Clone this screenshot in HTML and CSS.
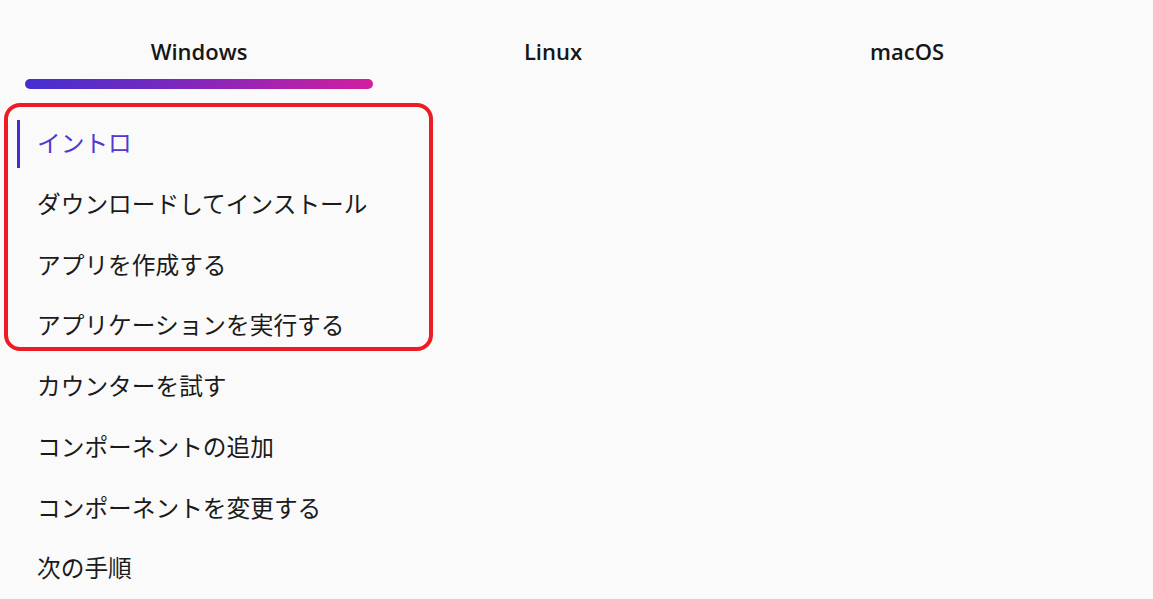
FILE: index.html
```html
<!DOCTYPE html>
<html lang="ja">
<head>
<meta charset="utf-8">
<title>Tutorial</title>
<link rel="stylesheet" href="styles.css">
</head>
<body>
<div class="page">
  <nav class="tabs">
    <div class="tab active"><span class="tab-label">Windows</span><span class="tab-bar"></span></div>
    <div class="tab"><span class="tab-label">Linux</span><span class="tab-bar"></span></div>
    <div class="tab"><span class="tab-label">macOS</span><span class="tab-bar"></span></div>
  </nav>
  <ul class="toc">
    <li class="toc-item active">イントロ</li>
    <li class="toc-item">ダウンロードしてインストール</li>
    <li class="toc-item">アプリを作成する</li>
    <li class="toc-item">アプリケーションを実行する</li>
    <li class="toc-item">カウンターを試す</li>
    <li class="toc-item">コンポーネントの追加</li>
    <li class="toc-item">コンポーネントを変更する</li>
    <li class="toc-item">次の手順</li>
  </ul>
  <div class="highlight"></div>
</div>
</body>
</html>
```

FILE: styles.css
```css
html, body {
  margin: 0;
  padding: 0;
  background: #fafafa;
}

.page {
  position: relative;
  width: 1153px;
  height: 599px;
  overflow: hidden;
  font-family: "Noto Sans CJK JP", "Noto Sans", sans-serif;
  color: #1b1b1b;
}

.tabs {
  display: flex;
  padding-left: 22px;
}

.tab {
  width: 354px;
  display: flex;
  flex-direction: column;
  align-items: center;
  padding-top: 36px;
}

.tab-label {
  font-family: "Open Sans", "Noto Sans", sans-serif;
  font-weight: 600;
  font-size: 22px;
  line-height: 30px;
  color: #161616;
}

.tab-bar {
  align-self: stretch;
  margin: 13px 3px 0;
  height: 10px;
  border-radius: 5px;
  background: transparent;
}

.tab.active .tab-bar {
  background: linear-gradient(90deg, #4330cf 0%, #7d27bd 45%, #d21e9f 100%);
}

.toc {
  list-style: none;
  margin: 31px 0 0;
  padding: 0 0 0 17px;
  display: flex;
  flex-direction: column;
  gap: 12.75px;
}

.toc-item {
  height: 44px;
  line-height: 44px;
  padding: 0 0 4px 17px;
  border-left: 3px solid transparent;
  font-size: 23.7px;
  white-space: nowrap;
}

.toc-item.active {
  border-left-color: #4530cf;
  color: #5038d2;
}

.highlight {
  position: absolute;
  left: 4px;
  top: 103px;
  width: 429px;
  height: 248px;
  box-sizing: border-box;
  border: 4.5px solid #ed1c24;
  border-radius: 16px;
  pointer-events: none;
}
```
